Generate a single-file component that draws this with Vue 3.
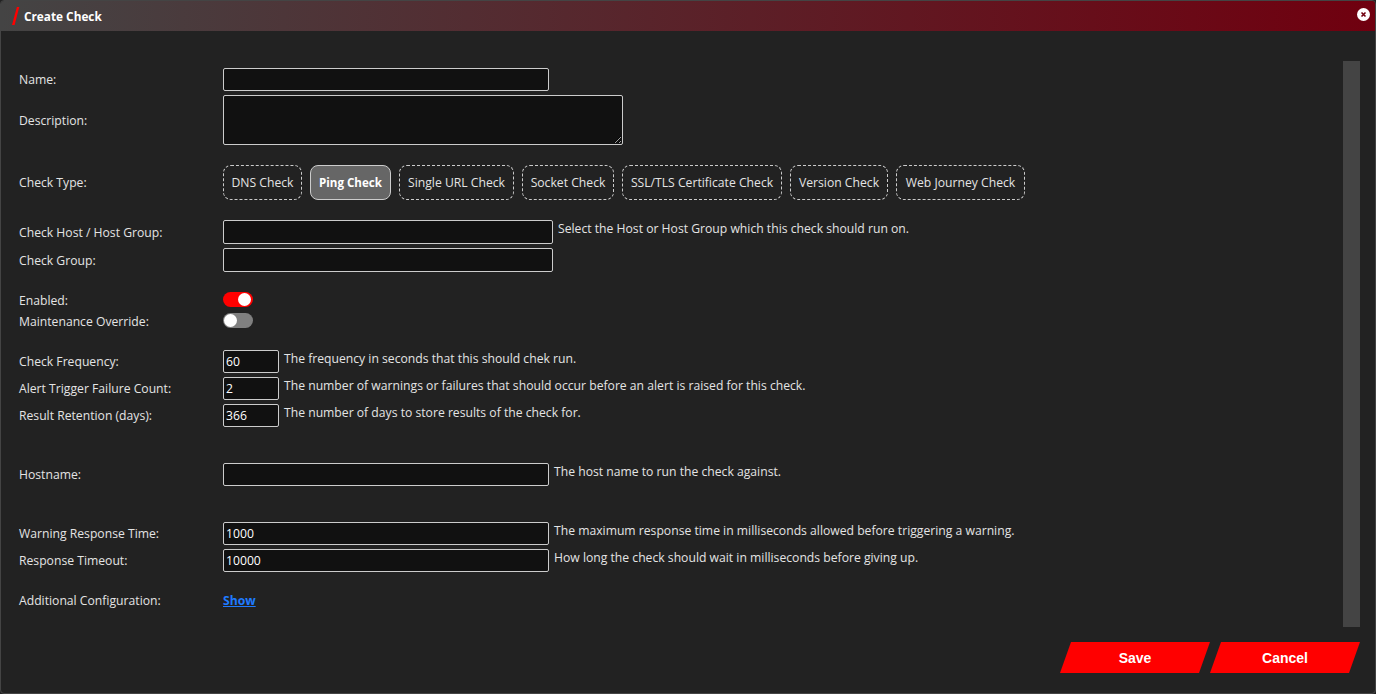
<template>
  <div class="window">
    <header class="titlebar">
      <svg class="slash" width="10" height="20" viewBox="0 0 10 20"><path d="M1 19 L3.6 19 L8.3 1 L5.9 1 Z" fill="#f00" /></svg>
      <span class="title">Create Check</span>
      <svg class="close" width="13" height="13" viewBox="0 0 13 13">
        <circle cx="6.5" cy="6.5" r="6.5" fill="#fff" />
        <path d="M4.5 4.5 L8.5 8.5 M8.5 4.5 L4.5 8.5" stroke="#70000f" stroke-width="1.6" />
      </svg>
    </header>
    <div class="body">
      <form class="form" @submit.prevent>
        <div class="row">
          <label>Name:</label>
          <input class="w-md" type="text" />
        </div>
        <div class="row">
          <label>Description:</label>
          <textarea class="desc"></textarea>
        </div>

        <div class="row sec-type">
          <label>Check Type:</label>
          <div class="types">
            <button
              v-for="t in types"
              :key="t.name"
              type="button"
              class="type"
              :class="{ active: t.name === 'Ping Check' }"
              :style="{ width: t.width + 'px' }"
            >{{ t.name }}</button>
          </div>
        </div>

        <div class="row sec-host">
          <label>Check Host / Host Group:</label>
          <input class="w-lg" type="text" />
          <span class="help help-host">Select the Host or Host Group which this check should run on.</span>
        </div>
        <div class="row">
          <label>Check Group:</label>
          <input class="w-lg" type="text" />
        </div>

        <div class="row tog sec-toggle">
          <label>Enabled:</label>
          <span class="toggle on"><i></i></span>
        </div>
        <div class="row tog">
          <label>Maintenance Override:</label>
          <span class="toggle"><i></i></span>
        </div>

        <div v-for="(n, i) in numbers" :key="n.label" class="row" :class="{ 'sec-num': i === 0 }">
          <label>{{ n.label }}</label>
          <input class="w-sm" type="text" :value="n.value" />
          <span class="help">{{ n.help }}</span>
        </div>

        <div class="row sec-hostname">
          <label>Hostname:</label>
          <input class="w-md" type="text" />
          <span class="help">The host name to run the check against.</span>
        </div>

        <div class="row sec-warn">
          <label>Warning Response Time:</label>
          <input class="w-md" type="text" value="1000" />
          <span class="help">The maximum response time in milliseconds allowed before triggering a warning.</span>
        </div>
        <div class="row">
          <label>Response Timeout:</label>
          <input class="w-md" type="text" value="10000" />
          <span class="help">How long the check should wait in milliseconds before giving up.</span>
        </div>

        <div class="row sec-extra">
          <label>Additional Configuration:</label>
          <a class="show" href="#" @click.prevent>Show</a>
        </div>
      </form>
      <div class="track"></div>
    </div>
    <footer class="actions">
      <button type="button" class="action">Save</button>
      <button type="button" class="action">Cancel</button>
    </footer>
  </div>
</template>

<script setup>
const types = [
  { name: 'DNS Check', width: 79 },
  { name: 'Ping Check', width: 81 },
  { name: 'Single URL Check', width: 115 },
  { name: 'Socket Check', width: 92 },
  { name: 'SSL/TLS Certificate Check', width: 160 },
  { name: 'Version Check', width: 98 },
  { name: 'Web Journey Check', width: 129 },
]
const numbers = [
  { label: 'Check Frequency:', value: '60', help: 'The frequency in seconds that this should chek run.' },
  { label: 'Alert Trigger Failure Count:', value: '2', help: 'The number of warnings or failures that should occur before an alert is raised for this check.' },
  { label: 'Result Retention (days):', value: '366', help: 'The number of days to store results of the check for.' },
]
</script>

<style>
html, body { margin: 0; background: #222; }
</style>

<style scoped>
* { box-sizing: border-box; }
.window {
  width: 1376px;
  height: 694px;
  display: flex;
  flex-direction: column;
  background: #222;
  border: 1px solid #444;
  border-radius: 4px;
  overflow: hidden;
  font-family: "Open Sans", "Noto Sans", sans-serif;
  font-size: 12.18px;
  color: #e4e4e4;
}
.titlebar {
  flex: none;
  height: 30px;
  display: flex;
  align-items: center;
  padding: 0 5px 0 10px;
  background: linear-gradient(90deg, #444 0%, #70000f 100%);
}
.slash { flex: none; margin-right: 3px; }
.title { font-weight: 700; font-size: 11.8px; color: #fff; margin-bottom: 1px; }
.close { margin: 0 0 3px auto; }
.body {
  flex: 1;
  min-height: 0;
  display: flex;
  padding: 30px 15px 0 18px;
}
.form { flex: 1; padding-top: 7px; }
.track { flex: none; width: 17px; background: #444; }
.row {
  display: flex;
  align-items: center;
  margin-bottom: 4px;
}
.row label { flex: none; width: 204px; }
input, textarea {
  display: block;
  height: 23px;
  padding: 2px;
  background: #111;
  color: #fff;
  border: 1px solid #ccc;
  border-radius: 2px;
  font: inherit;
  outline: none;
}
.w-sm { width: 56px; height: 23px; }
.w-md { width: 326px; }
.w-lg { width: 330px; height: 24px; }
.desc { width: 400px; height: 50px; }
.help { margin: 0 0 6px 5px; }
.help-host { margin-bottom: 8px; }
.types { display: flex; gap: 8px; }
.type {
  height: 35px;
  padding: 0;
  background: transparent;
  color: #e4e4e4;
  border: 1px dashed #ccc;
  border-radius: 8px;
  font: inherit;
  white-space: nowrap;
}
.type.active {
  background: #666;
  border-style: solid;
  color: #fff;
  font-weight: 700;
  font-size: 11.6px;
  padding-bottom: 1px;
}
.toggle {
  display: flex;
  width: 30px;
  height: 15px;
  padding: 1px;
  border-radius: 8px;
  background: #808080;
}
.toggle i {
  display: block;
  width: 13px;
  height: 13px;
  border-radius: 50%;
  background: #fff;
}
.toggle.on { background: #f00; justify-content: flex-end; padding-right: 2px; }
.tog { height: 15px; margin-bottom: 6px; }
.tog label { padding-top: 2px; }
.show { color: #1f7bff; font-weight: 700; text-decoration: underline; }
.sec-type { margin-top: 20px; }
.sec-host { margin-top: 20px; height: 24px; }
.sec-toggle { margin-top: 20px; }
.sec-num { margin-top: 22px; }
.sec-hostname { margin-top: 36px; }
.sec-warn { margin-top: 36px; }
.sec-extra { margin-top: 20px; }
.actions {
  flex: none;
  display: flex;
  justify-content: flex-end;
  padding: 15px 15px 20px 0;
}
.action {
  width: 150px;
  height: 31px;
  background: #f00;
  color: #fff;
  border: 0;
  clip-path: polygon(11px 0, 100% 0, 139px 100%, 0 100%);
  font-family: "Liberation Sans", Arial, sans-serif;
  font-size: 14px;
  font-weight: 700;
}
</style>
